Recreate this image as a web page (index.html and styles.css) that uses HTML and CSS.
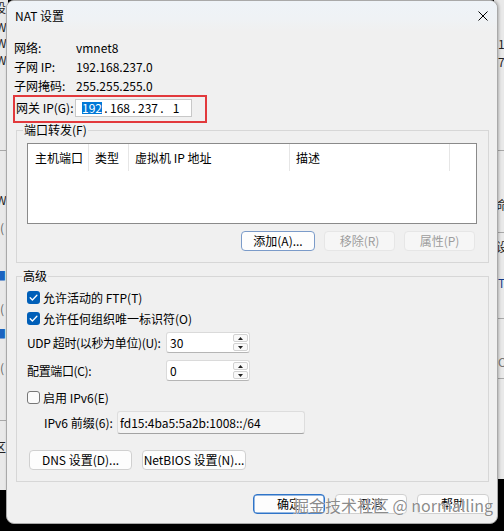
FILE: index.html
```html
<!DOCTYPE html>
<html lang="zh-CN">
<head>
<meta charset="utf-8">
<title>NAT 设置</title>
<link rel="stylesheet" href="styles.css">
</head>
<body>
<div class="desktop">
  <div class="bw-left">
    <span class="frag f1">设</span>
    <span class="frag f2">W</span>
    <span class="frag f3">W</span>
    <span class="frag f4">W</span>
    <span class="bw-line l1"></span>
    <span class="frag f5">W</span>
    <span class="frag f6">(</span>
    <span class="frag blue b1">■</span>
    <span class="frag f7">(</span>
    <span class="frag blue b2">■</span>
    <span class="frag f8">(</span>
    <span class="bw-line l2"></span>
    <span class="frag f9">区</span>
  </div>
  <div class="bw-right">
    <span class="frag r1">1.</span>
    <span class="frag r2">7.</span>
    <span class="bw-line l3"></span>
    <span class="frag r3">命</span>
    <span class="bw-line l4"></span>
    <span class="frag r4">设</span>
    <span class="frag r5">T</span>
    <span class="bw-line l5"></span>
    <span class="frag r6">C</span>
    <span class="bw-line l6"></span>
  </div>

  <div class="dialog">
    <div class="titlebar">
      <span class="title">NAT 设置</span>
      <svg class="close" width="10" height="10" viewBox="0 0 10 10"><path d="M0.5 0.5 L9.5 9.5 M9.5 0.5 L0.5 9.5" stroke="#000" stroke-width="1" fill="none"/></svg>
    </div>
    <div class="content">
      <div class="info">
        <span>网络:</span><span>vmnet8</span>
        <span>子网 IP:</span><span>192.168.237.0</span>
        <span>子网掩码:</span><span>255.255.255.0</span>
      </div>
      <div class="hl">
        <span class="gw-label">网关 IP(G):</span>
        <div class="ipbox">
          <span class="oct"><span class="sel">192</span></span><span class="dot">.</span>
          <span class="oct">168</span><span class="dot">.</span>
          <span class="oct">237</span><span class="dot">.</span>
          <span class="oct">1</span>
        </div>
      </div>

      <fieldset class="group g1">
        <legend>端口转发(F)</legend>
        <div class="list">
          <div class="list-head">
            <div class="col c1">主机端口</div>
            <div class="col c2">类型</div>
            <div class="col c3">虚拟机 IP 地址</div>
            <div class="col c4">描述</div>
          </div>
        </div>
        <div class="btnrow">
          <button class="btn focus w-add">添加(A)...</button>
          <button class="btn disabled w-sm">移除(R)</button>
          <button class="btn disabled w-sm">属性(P)</button>
        </div>
      </fieldset>

      <fieldset class="group g2">
        <legend>高级</legend>
        <div class="chk-row first">
          <span class="cb on"><svg width="13" height="13" viewBox="0 0 13 13"><path d="M3.2 6.8 L5.4 9 L9.9 4.3" stroke="#fff" stroke-width="1.3" fill="none" stroke-linecap="round" stroke-linejoin="round"/></svg></span>
          <span>允许活动的 FTP(T)</span>
        </div>
        <div class="chk-row">
          <span class="cb on"><svg width="13" height="13" viewBox="0 0 13 13"><path d="M3.2 6.8 L5.4 9 L9.9 4.3" stroke="#fff" stroke-width="1.3" fill="none" stroke-linecap="round" stroke-linejoin="round"/></svg></span>
          <span>允许任何组织唯一标识符(O)</span>
        </div>
        <div class="frow udp">
          <span class="flabel">UDP 超时(以秒为单位)(U):</span>
          <div class="spin">
            <span class="spin-val">30</span>
            <div class="spinbtns">
              <span class="sb"><svg width="5" height="3" viewBox="0 0 5 3"><path d="M0 3 L2.5 0 L5 3 Z" fill="#222"/></svg></span>
              <span class="sb"><svg width="5" height="3" viewBox="0 0 5 3"><path d="M0 0 L2.5 3 L5 0 Z" fill="#222"/></svg></span>
            </div>
          </div>
        </div>
        <div class="frow port">
          <span class="flabel">配置端口(C):</span>
          <div class="spin">
            <span class="spin-val">0</span>
            <div class="spinbtns">
              <span class="sb"><svg width="5" height="3" viewBox="0 0 5 3"><path d="M0 3 L2.5 0 L5 3 Z" fill="#222"/></svg></span>
              <span class="sb"><svg width="5" height="3" viewBox="0 0 5 3"><path d="M0 0 L2.5 3 L5 0 Z" fill="#222"/></svg></span>
            </div>
          </div>
        </div>
        <div class="chk-row ipv6">
          <span class="cb off"></span>
          <span>启用 IPv6(E)</span>
        </div>
        <div class="frow prefix">
          <span class="plabel">IPv6 前缀(6):</span>
          <div class="ro">fd15:4ba5:5a2b:1008::/64</div>
        </div>
        <div class="btnrow2">
          <button class="btn w-dns">DNS 设置(D)...</button>
          <button class="btn w-nb">NetBIOS 设置(N)...</button>
        </div>
      </fieldset>

      <div class="footer">
        <button class="btn default w-ft">确定</button>
        <button class="btn w-ft">取消</button>
        <button class="btn w-ft">帮助</button>
      </div>
    </div>
  </div>

  <div class="watermark">掘金技术社区 @ normalling</div>
</div>
</body>
</html>
```

FILE: styles.css
```css
* { box-sizing: border-box; }
html, body { margin: 0; padding: 0; }
body {
  width: 504px;
  height: 531px;
  overflow: hidden;
  background: #000;
  font-family: "Noto Sans CJK SC", "Noto Sans", sans-serif;
  font-size: 12px;
  color: #000;
}
.desktop { position: relative; width: 504px; height: 531px; background: #000; }

/* background window fragments */
.bw-left, .bw-right {
  position: absolute;
  top: 0;
  background: #e9e9e9;
  overflow: hidden;
}
.bw-left { left: 0; width: 8px; height: 490px; }
.bw-right { left: 494px; width: 10px; height: 479px; }
.frag { position: absolute; font-size: 12px; line-height: 14px; color: #222; }
.bw-left .frag { left: -4px; }
.bw-right .frag { left: 4px; }
.f1 { top: 1px; left: -6px !important; }
.f2 { top: 20px; }
.f3 { top: 36px; }
.f4 { top: 53px; }
.f5 { top: 193px; }
.f6 { top: 221px; left: 0 !important; color: #666 !important; }
.f7 { top: 302px; left: 0 !important; color: #666 !important; }
.f8 { top: 361px; left: 0 !important; color: #666 !important; }
.f9 { top: 440px; left: -6px !important; }
.blue { color: #1c64c0 !important; left: -6px !important; }
.b1 { top: 269px; }
.b2 { top: 327px; }
.bw-line { position: absolute; left: 0; right: 0; height: 1px; background: #a8a8a8; }
.l1 { top: 150px; }
.l2 { top: 420px; }
.l3 { top: 150px; }
.l4 { top: 232px; }
.l5 { top: 318px; }
.l6 { top: 378px; }
.r1 { top: 37px; }
.r2 { top: 55px; }
.r3 { top: 198px; left: 2px !important; }
.r4 { top: 240px; left: 2px !important; }
.r5 { top: 276px; color: #123c8c !important; }
.r6 { top: 355px; color: #777 !important; }

/* dialog window */
.dialog {
  position: absolute;
  left: 6px;
  top: 0;
  width: 492px;
  height: 524px;
  background: #f0f0f0;
  border: 1px solid #a9a9a9;
  border-radius: 8px;
  overflow: hidden;
  box-shadow: 1px 0 3px rgba(0,0,0,0.25);
}
.titlebar {
  height: 30px;
  display: flex;
  align-items: center;
  justify-content: space-between;
  padding: 0 9px 0 8px;
  background: linear-gradient(#eef3f8, #eff2f5 60%, #f0f0f0);
}
.title { font-size: 12px; line-height: 16px; }
.close { display: block; }

.content { padding: 7px 8px 0 7px; }

.info {
  display: grid;
  grid-template-columns: 62px auto;
  grid-auto-rows: 19px;
  line-height: 19px;
}

.hl {
  display: flex;
  align-items: flex-start;
  width: 194px;
  height: 28px;
  margin-left: -1px;
  border: 2px solid #e2393c;
  padding: 2px 0 0 1px;
}
.gw-label { width: 59px; line-height: 18px; flex: none; white-space: nowrap; }
.ipbox {
  width: 117px;
  height: 18px;
  background: #fff;
  border: 1px solid #c8c8c8;
  display: flex;
  align-items: center;
  padding-left: 4px;
  line-height: 16px;
}
.oct { width: 24px; text-align: center; }
.dot { width: 4px; text-align: center; }
.sel {
  display: inline-block;
  background: #0078d7;
  color: #fff;
  line-height: 12px;
  padding: 0;
}

/* group boxes */
.group {
  margin: 0 0 0 2px;
  min-width: 0;
  border: 1px solid #d7d7d7;
  padding: 6px 11px 11px 10px;
}
.group legend {
  padding: 0 1px;
  margin-left: -4px;
  line-height: 14px;
}
.g2 { margin-top: 6px; padding-top: 4px; }
.g2 legend { margin-left: -5px; }

.list {
  height: 81px;
  background: #fff;
  border: 1px solid #8a8a8a;
}
.list-head { display: flex; height: 27px; }
.col {
  height: 27px;
  line-height: 27px;
  border-right: 1px solid #e6e6e6;
  padding-left: 6px;
  white-space: nowrap;
  flex: none;
}
.c1 { width: 61px; padding-left: 7px; }
.c2 { width: 40px; }
.c3 { width: 161px; }
.c4 { width: 160px; }

.btn {
  font: inherit;
  font-size: 12px;
  height: 20px;
  padding: 0;
  margin: 0;
  border: 1px solid #d0d0d0;
  border-radius: 4px;
  background: #fdfdfd;
  color: #000;
  line-height: 18px;
  display: flex;
  align-items: center;
  justify-content: center;
  white-space: nowrap;
}
.btn.focus { border-color: #7b9bc9; }
.btn.default { border-color: #2f74c8; box-shadow: inset 0 0 0 0.5px #2f74c8; }
.btn.disabled { color: #9d9d9d; background: #f6f6f6; border-color: #e6e6e6; }

.btnrow {
  display: flex;
  justify-content: flex-end;
  gap: 9px;
  margin-top: 7px;
  padding-right: 2px;
}
.w-add { width: 74px; }
.w-sm { width: 71px; }

.chk-row { display: flex; align-items: center; height: 21px; white-space: nowrap; }
.chk-row.first { margin-top: 0; }
.cb {
  width: 13px;
  height: 13px;
  border-radius: 3px;
  margin-right: 3px;
  flex: none;
}
.cb svg { display: block; }
.cb.on { background: #005fb8; }
.cb.off { border: 1px solid #777; background: #fbfbfb; }

.frow { display: flex; align-items: center; white-space: nowrap; }
.flabel { width: 139px; flex: none; white-space: nowrap; letter-spacing: -0.35px; }
.udp { margin-top: 3px; }
.port { margin-top: 7px; }
.ipv6 { margin-top: 6px; }

.spin {
  width: 84px;
  height: 21px;
  flex: none;
  display: flex;
  background: #fff;
  border: 1px solid #dadada;
  border-bottom-color: #b5b5b5;
  border-radius: 3px;
}
.spin-val { padding-left: 3px; line-height: 19px; }
.spinbtns {
  margin-left: auto;
  width: 17px;
  display: flex;
  flex-direction: column;
  gap: 1px;
  padding: 1px;
}
.sb {
  flex: 1;
  border: 1px solid #d2d2d2;
  border-radius: 2px;
  background: #f9f9f9;
  display: flex;
  align-items: center;
  justify-content: center;
}
.sb svg { display: block; }

.prefix { margin-top: 3px; padding-left: 17px; }
.plabel { width: 73px; flex: none; }
.ro {
  width: 188px;
  height: 23px;
  flex: none;
  line-height: 21px;
  padding-left: 2px;
  background: #f4f4f4;
  border: 1px solid #dddddd;
  border-bottom-color: #a3a3a3;
  border-radius: 3px;
  white-space: nowrap;
}

.btnrow2 { display: flex; gap: 10px; margin-top: 16px; padding-left: 2px; }
.w-dns { width: 103px; }
.w-nb { width: 104px; }

.footer {
  display: flex;
  justify-content: flex-end;
  gap: 10px;
  margin-top: 12px;
}
.w-ft { width: 72px; }

.watermark {
  position: absolute;
  left: 293px;
  top: 494px;
  font-size: 16px;
  line-height: 22px;
  color: rgba(118,118,118,0.85);
  text-shadow: 0 0 1px #fff, 0 0 1px #fff;
  white-space: nowrap;
  font-family: "Noto Sans CJK SC", "Noto Sans", sans-serif;
}
```
